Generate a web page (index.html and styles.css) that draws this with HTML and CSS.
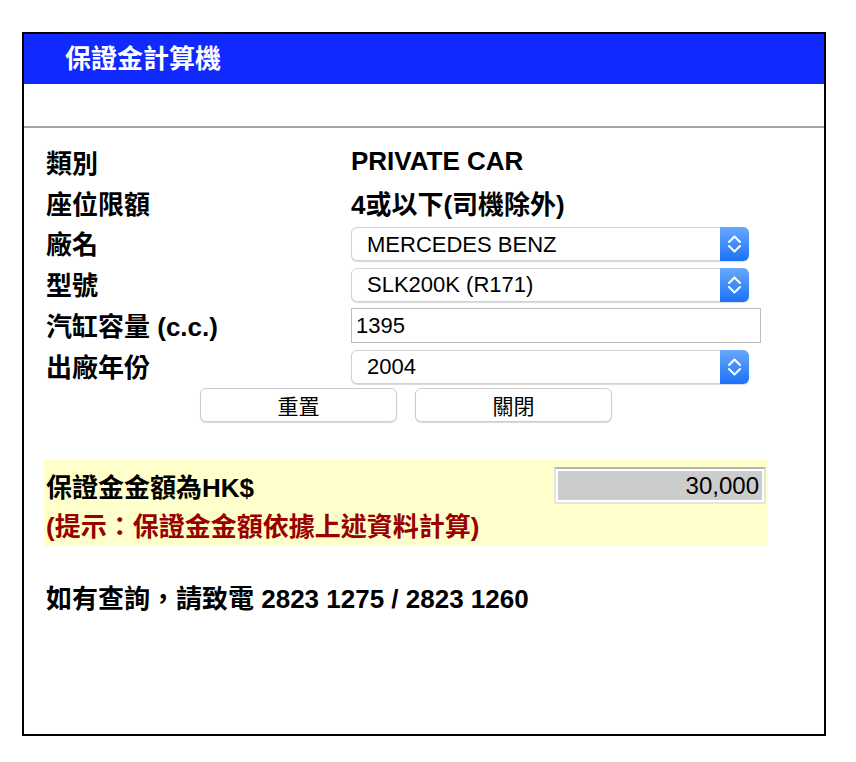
FILE: index.html
```html
<!DOCTYPE html>
<html lang="zh-Hant">
<head>
    <meta charset="UTF-8">
    <title>保證金計算機</title>
    <link rel="stylesheet" href="styles.css">
</head>
<body>

<div class="calc-frame">
    <div class="calc-header">保證金計算機</div>
    <div class="calc-spacer"></div>
    <div class="calc-rule"></div>

    <div class="calc-body">
        <div class="calc-form">
            <div class="calc-label">類別</div>
            <div class="calc-value">PRIVATE CAR</div>

            <div class="calc-label">座位限額</div>
            <div class="calc-value">4或以下(司機除外)</div>

            <div class="calc-label">廠名</div>
            <div class="calc-field">
                <div class="select-box">
                    <select class="calc-select">
                        <option>MERCEDES BENZ</option>
                    </select>
                    <span class="select-arrow">
                        <svg width="29" height="34" viewBox="0 0 29 34"><path d="M9 15 L14.5 9.5 L20 15 M9 19 L14.5 24.5 L20 19" fill="none" stroke="#fff" stroke-width="2" stroke-linecap="round" stroke-linejoin="round"/></svg>
                    </span>
                </div>
            </div>

            <div class="calc-label">型號</div>
            <div class="calc-field">
                <div class="select-box">
                    <select class="calc-select">
                        <option>SLK200K (R171)</option>
                    </select>
                    <span class="select-arrow">
                        <svg width="29" height="34" viewBox="0 0 29 34"><path d="M9 15 L14.5 9.5 L20 15 M9 19 L14.5 24.5 L20 19" fill="none" stroke="#fff" stroke-width="2" stroke-linecap="round" stroke-linejoin="round"/></svg>
                    </span>
                </div>
            </div>

            <div class="calc-label">汽缸容量 (c.c.)</div>
            <div class="calc-field">
                <input type="text" class="calc-input" value="1395">
            </div>

            <div class="calc-label">出廠年份</div>
            <div class="calc-field">
                <div class="select-box">
                    <select class="calc-select">
                        <option>2004</option>
                    </select>
                    <span class="select-arrow">
                        <svg width="29" height="34" viewBox="0 0 29 34"><path d="M9 15 L14.5 9.5 L20 15 M9 19 L14.5 24.5 L20 19" fill="none" stroke="#fff" stroke-width="2" stroke-linecap="round" stroke-linejoin="round"/></svg>
                    </span>
                </div>
            </div>
        </div>

        <div class="calc-buttons">
            <button type="button" class="calc-btn">重置</button>
            <button type="button" class="calc-btn">關閉</button>
        </div>

        <!-- Result box -->
        <div class="calc-result">
            <div class="result-row">
                <span class="result-label">保證金金額為HK$</span>
                <span class="result-amount">30,000</span>
            </div>
            <div class="result-hint">(提示：保證金金額依據上述資料計算)</div>
        </div>

        <div class="calc-contact">如有查詢，請致電 2823 1275 / 2823 1260</div>
    </div>
</div>

</body>
</html>
```

FILE: styles.css
```css
/* Global styles */
body {
    margin: 0;
    padding: 0;
    background: #ffffff;
    font-family: "Liberation Sans", "Noto Sans CJK TC", sans-serif;
    color: #000;
}

.calc-frame {
    box-sizing: border-box;
    width: 804px;
    height: 704px;
    margin: 32px 0 0 22px;
    border: 2px solid #000;
}

.calc-header {
    height: 50px;
    background: #1029ff;
    color: #fff;
    font-size: 26px;
    font-weight: bold;
    line-height: 50px;
    padding-left: 41px;
}

.calc-spacer {
    height: 42px;
}

.calc-rule {
    height: 2px;
    background: #a4a4a4;
}

.calc-body {
    padding: 14px 0 0 20px;
}

.calc-form {
    display: grid;
    grid-template-columns: 305px 410px;
    grid-template-rows: 42px 40px 40px 41px 41px 41px;
    padding-left: 2px;
    width: 720px;
}

.calc-label,
.calc-value {
    display: flex;
    align-items: center;
    padding-bottom: 3px;
    font-size: 26px;
    font-weight: bold;
}

.calc-field {
    display: flex;
    align-items: center;
}

.select-box {
    position: relative;
    width: 398px;
    height: 34px;
}

.calc-select {
    appearance: none;
    -webkit-appearance: none;
    box-sizing: border-box;
    width: 100%;
    height: 34px;
    margin: 0;
    padding: 0 0 0 15px;
    border: 1px solid #d2d2d2;
    border-radius: 6px;
    background: #fff;
    box-shadow: 0 1px 1px rgba(0, 0, 0, 0.15);
    font-family: "Liberation Sans", "Noto Sans CJK TC", sans-serif;
    font-size: 22px;
    color: #000;
}

.select-arrow {
    position: absolute;
    top: 0;
    right: 0;
    width: 29px;
    height: 34px;
    border-radius: 0 6px 6px 0;
    background: linear-gradient(to bottom, #68a8fd, #1b72f7);
}

.select-arrow svg {
    display: block;
}

.calc-input {
    box-sizing: border-box;
    width: 410px;
    height: 35px;
    margin: 0;
    padding: 0 0 0 4px;
    border: 1px solid #bdbdbd;
    border-radius: 0;
    font-family: "Liberation Sans", sans-serif;
    font-size: 22px;
    color: #000;
}

.calc-buttons {
    display: flex;
    justify-content: center;
    gap: 18px;
    width: 724px;
    margin-top: 1px;
}

.calc-btn {
    width: 197px;
    height: 34px;
    padding: 0;
    border: 1px solid #cccccc;
    border-radius: 6px;
    background: #fff;
    box-shadow: 0 1px 1px rgba(0, 0, 0, 0.15);
    font-family: "Liberation Sans", "Noto Sans CJK TC", sans-serif;
    font-size: 21px;
    color: #000;
}

.calc-result {
    width: 724px;
    height: 86px;
    margin-top: 38px;
    background: #ffffcc;
    box-sizing: border-box;
    padding: 0 2px;
}

.result-row {
    display: flex;
    justify-content: space-between;
    align-items: center;
    height: 50px;
}

.result-label {
    font-size: 26px;
    font-weight: bold;
}

.result-amount {
    box-sizing: border-box;
    width: 212px;
    height: 37px;
    padding-right: 5px;
    border: 2px solid #e4e4e4;
    border-top-color: #b4b4b4;
    box-shadow: inset 0 0 0 2px #fff;
    background: #cccccc;
    font-size: 24px;
    line-height: 33px;
    text-align: right;
}

.result-hint {
    font-size: 26px;
    font-weight: bold;
    color: #990000;
    line-height: 34px;
}

.calc-contact {
    margin-top: 38px;
    padding-left: 2px;
    font-size: 26px;
    font-weight: bold;
    line-height: 30px;
}
```
